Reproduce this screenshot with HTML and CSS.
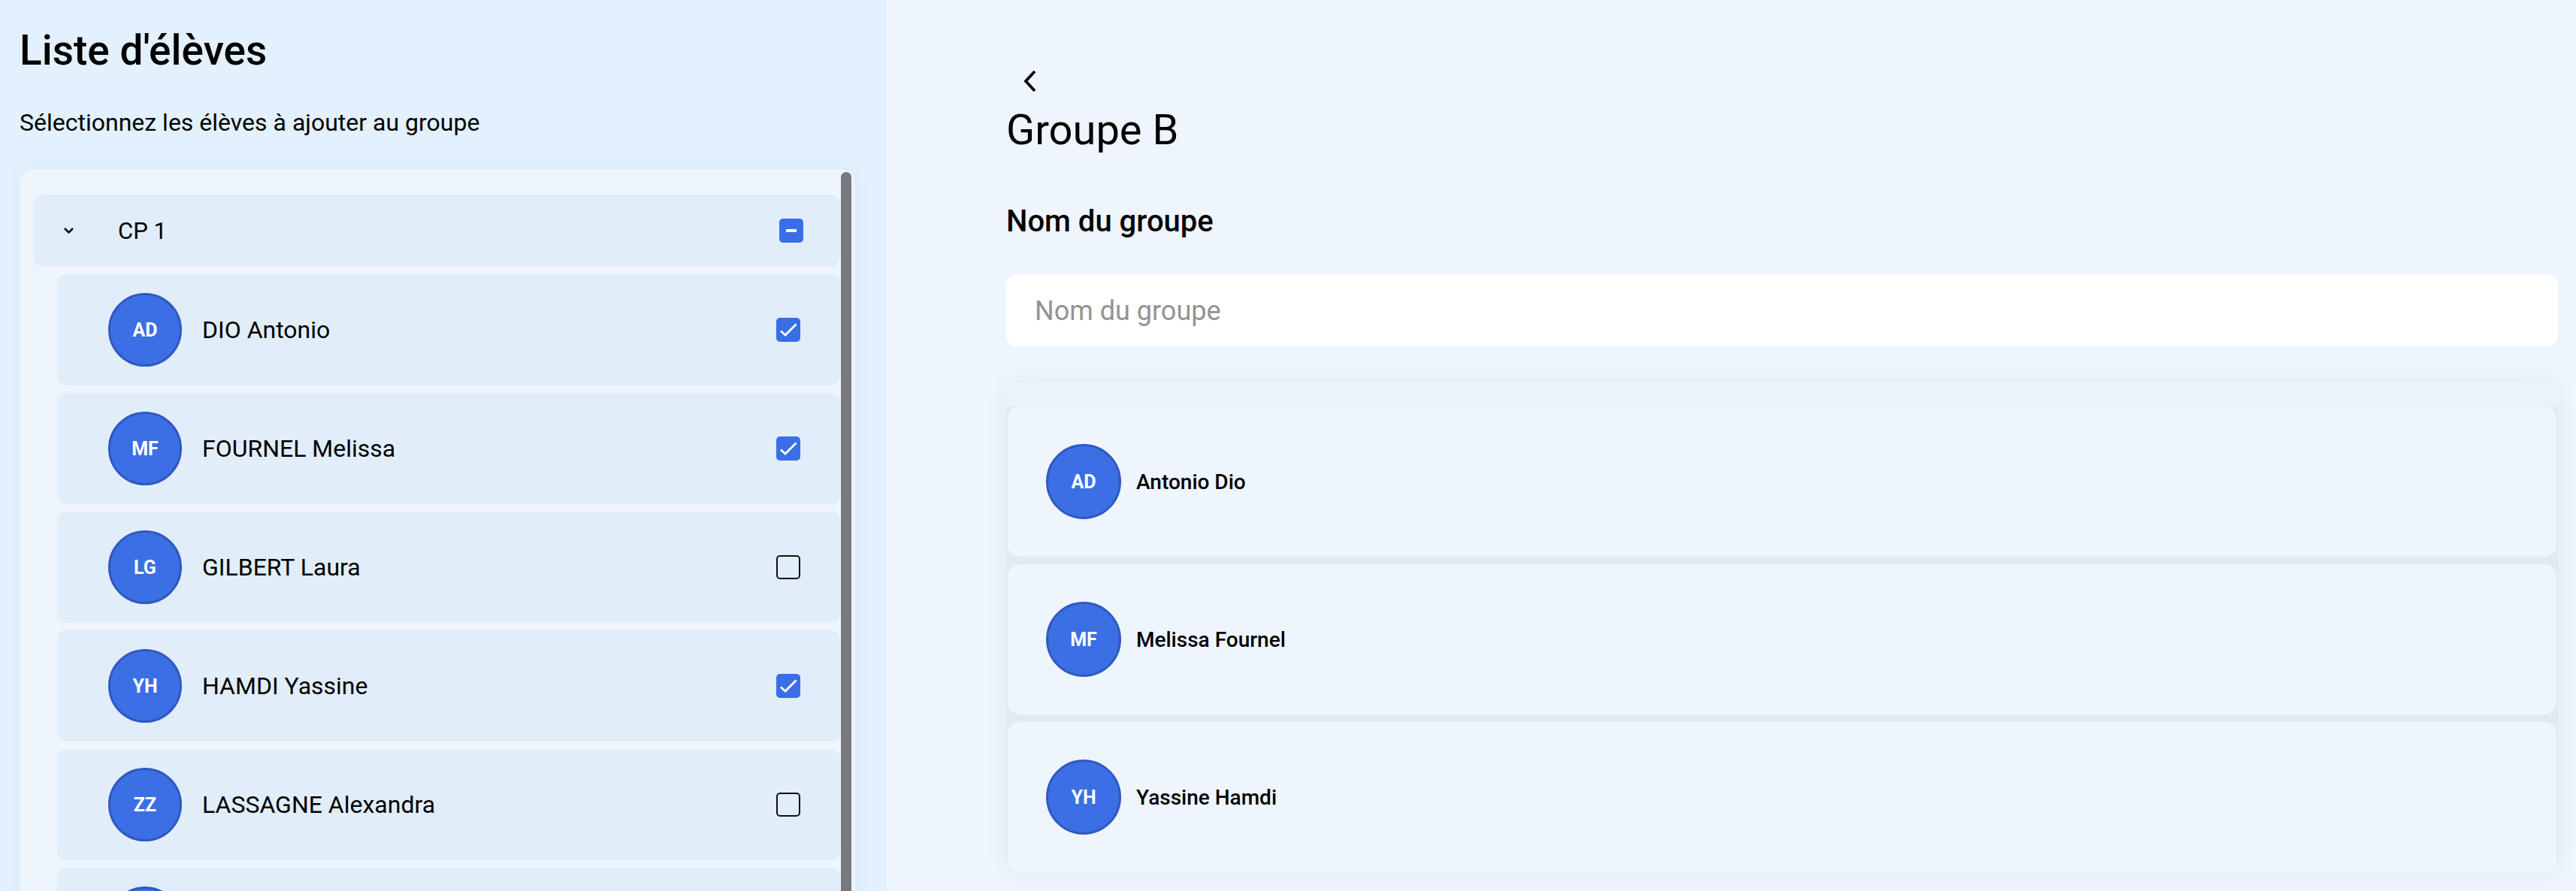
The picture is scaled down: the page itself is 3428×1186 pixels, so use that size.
FILE: index.html
```html
<!DOCTYPE html>
<html lang="fr">
<head>
    <meta charset="UTF-8">
    <title>Groupe B</title>
    <link rel="stylesheet" href="styles.css">
</head>
<body>
<div class="layout">
    <aside class="students">
        <h1>Liste d'élèves</h1>
        <p class="hint">Sélectionnez les élèves à ajouter au groupe</p>
        <div class="picker">
            <div class="picker-list">
                <div class="class-row">
                    <svg class="caret" width="15" height="10" viewBox="0 0 15 10">
                        <path d="M2 2 L7.5 7.5 L13 2"/>
                    </svg>
                    <span class="class-name">CP 1</span>
                    <span class="box checked">
                        <span class="dash"></span>
                    </span>
                </div>
                <ul class="student-list">
                    <li class="student">
                        <span class="avatar">AD</span>
                        <span class="student-name">DIO Antonio</span>
                        <span class="box checked">
                            <svg width="32" height="32" viewBox="0 0 32 32"><path d="M6 17.5 L12 23 L26.5 8.5"/></svg>
                        </span>
                    </li>
                    <li class="student">
                        <span class="avatar">MF</span>
                        <span class="student-name">FOURNEL Melissa</span>
                        <span class="box checked">
                            <svg width="32" height="32" viewBox="0 0 32 32"><path d="M6 17.5 L12 23 L26.5 8.5"/></svg>
                        </span>
                    </li>
                    <li class="student">
                        <span class="avatar">LG</span>
                        <span class="student-name">GILBERT Laura</span>
                        <span class="box"></span>
                    </li>
                    <li class="student">
                        <span class="avatar">YH</span>
                        <span class="student-name">HAMDI Yassine</span>
                        <span class="box checked">
                            <svg width="32" height="32" viewBox="0 0 32 32"><path d="M6 17.5 L12 23 L26.5 8.5"/></svg>
                        </span>
                    </li>
                    <li class="student">
                        <span class="avatar">ZZ</span>
                        <span class="student-name">LASSAGNE Alexandra</span>
                        <span class="box"></span>
                    </li>
                    <li class="student">
                        <span class="avatar">LM</span>
                        <span class="student-name">MARTIN Lucas</span>
                        <span class="box"></span>
                    </li>
                </ul>
            </div>
            <div class="scrollbar">
                <div class="thumb"></div>
            </div>
        </div>
    </aside>

    <main class="group">
        <button class="back" title="Retour">
            <svg width="20" height="32" viewBox="0 0 20 32">
                <path d="M16 3 L4 16 L16 29"/>
            </svg>
        </button>
        <h2>Groupe B</h2>
        <label class="field-label" for="group-name">Nom du groupe</label>
        <input id="group-name" class="field" type="text" placeholder="Nom du groupe">
        <ul class="members">
            <li class="member">
                <span class="avatar">AD</span>
                <span class="member-name">Antonio Dio</span>
            </li>
            <li class="member">
                <span class="avatar">MF</span>
                <span class="member-name">Melissa Fournel</span>
            </li>
            <li class="member">
                <span class="avatar">YH</span>
                <span class="member-name">Yassine Hamdi</span>
            </li>
        </ul>
    </main>
</div>
</body>
</html>
```

FILE: styles.css
```css
* {
  box-sizing: border-box;
}

body {
  margin: 0;
  font-family: Roboto, "Noto Sans", sans-serif;
  color: #000;
  background: #eef5fd;
}

.layout {
  display: grid;
  grid-template-columns: 1180px 1fr;
  height: 100vh;
  overflow: hidden;
}

/* left column: pick students */
.students {
  background: #e3f0fd;
  padding: 34px 42px 0 26px;
  overflow: hidden;
}

.students h1 {
  margin: 0;
  font-size: 55px;
  font-weight: 500;
  line-height: 1.2;
}

.hint {
  margin: 44px 0 0;
  font-size: 32px;
  line-height: 1.2;
}

.picker {
  display: flex;
  margin-top: 43px;
  padding: 0 5px 0 18px;
  background: #eef5fd;
  border-radius: 20px;
  box-shadow: 0 0 24px rgba(40, 90, 160, 0.05);
}

.picker-list {
  flex: 1;
  display: flex;
  flex-direction: column;
  gap: 10px;
  padding-top: 34px;
}

.scrollbar {
  width: 14px;
  margin: 4px 0 0 1px;
}
.scrollbar .thumb {
  height: 100%;
  background: #76797d;
  border-radius: 7px;
}

.class-row {
  display: flex;
  align-items: center;
  height: 96px;
  padding: 0 49px 0 40px;
  background: #e1edf9;
  border-radius: 14px;
}

.caret {
  flex: none;
  fill: none;
  stroke: #111;
  stroke-width: 2.6;
}

.class-name {
  flex: 1;
  margin-left: 58px;
  font-size: 31px;
}

.student-list {
  list-style: none;
  margin: 0 0 0 32px;
  padding: 0;
  display: flex;
  flex-direction: column;
  gap: 10px;
}

.student {
  display: flex;
  align-items: center;
  height: 148px;
  padding: 0 53px 0 68px;
  background: #e1edf9;
  border-radius: 12px;
}

.student .avatar {
  width: 98px;
  height: 98px;
}

.student-name {
  flex: 1;
  margin-left: 27px;
  font-size: 32px;
}

/* checkboxes */
.box {
  flex: none;
  display: flex;
  align-items: center;
  justify-content: center;
  width: 32px;
  height: 32px;
  border: 2.5px solid #111;
  border-radius: 5px;
}
.box.checked {
  background: #3a6ee4;
  border: 0;
}
.box svg {
  fill: none;
  stroke: #fff;
  stroke-width: 2.8;
}
.box .dash {
  width: 14px;
  height: 4px;
  background: #fff;
}

.avatar {
  flex: none;
  display: flex;
  align-items: center;
  justify-content: center;
  border-radius: 50%;
  background: #3b6fe3;
  border: 3px solid #3058c2;
  color: #fff;
  font-size: 25px;
  font-weight: 700;
}

/* right column: the group */
.group {
  padding: 92px 24px 0 159px;
  overflow: hidden;
}

.back {
  display: block;
  width: 20px;
  height: 32px;
  margin-left: 22px;
  padding: 0;
  border: 0;
  background: none;
  cursor: pointer;
}
.back svg {
  display: block;
  fill: none;
  stroke: #000;
  stroke-width: 3.8;
}

.group h2 {
  margin: 16px 0 0;
  font-size: 56px;
  font-weight: 400;
  line-height: 1.2;
}

.field-label {
  display: block;
  margin-top: 64px;
  font-size: 40px;
  font-weight: 500;
  line-height: 1.2;
}

.field {
  display: block;
  width: 100%;
  height: 95px;
  margin-top: 47px;
  padding: 0 38px;
  border: 0;
  border-radius: 14px;
  background: #fff;
  font-family: inherit;
  font-size: 36px;
  color: #000;
  outline: none;
}
.field::placeholder {
  color: #939393;
}

.members {
  list-style: none;
  margin: 48px 0 0;
  padding: 32px 2px 0;
  display: flex;
  flex-direction: column;
  gap: 10px;
  background: linear-gradient(#edf4fc, #eaf1fa 31px, #e3e9f1 33px);
  border-radius: 20px;
  box-shadow: 0 0 30px rgba(40, 80, 140, 0.08);
}

.member {
  display: flex;
  align-items: center;
  height: 200px;
  padding-left: 51px;
  background: #eef5fd;
  border-radius: 16px;
}

.member .avatar {
  width: 100px;
  height: 100px;
}

.member-name {
  margin-left: 20px;
  font-size: 28px;
  font-weight: 500;
}
```
